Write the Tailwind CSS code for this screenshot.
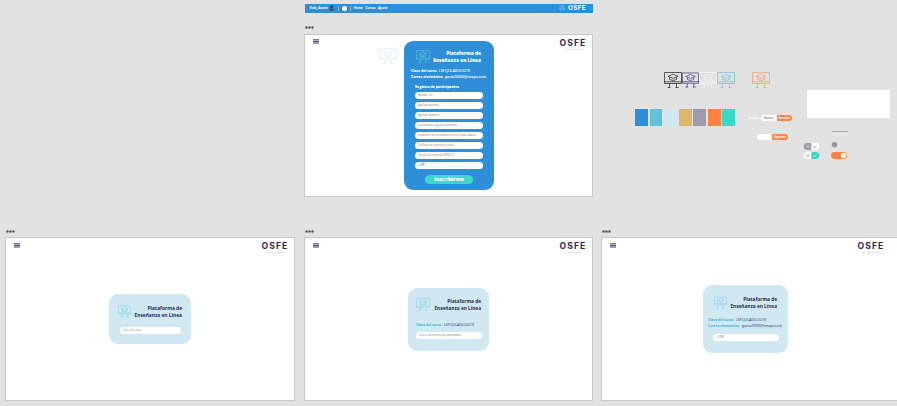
<!DOCTYPE html>
<html lang="es">
<head>
<meta charset="utf-8">
<title>OSFE</title>
<script src="https://cdn.jsdelivr.net/npm/@tailwindcss/browser@4"></script>
</head>
<body class="relative w-[897px] h-[406px] overflow-hidden bg-[#e2e2e2] font-['Open_Sans',sans-serif] text-[#2b2858]">
<svg class="hidden">
  <symbol id="pc" viewBox="0 0 18 16"><g fill="none" stroke="currentColor" stroke-width=".8"><path d="M.5.5h17v11H.5z M.5 9.8h17 M5.5 11.5v4 M12.5 11.5v4 M3.5 15.5h3 M11.5 15.5h3"/><path d="M4 4.3 9 2.2l5 2.1-5 2.1z M5.6 5.2v2.3q3.4 2 6.8 0V5.2"/></g></symbol>
  <symbol id="menu" viewBox="0 0 6 5"><path d="M0 .8h6M0 2.4h6M0 4h6" stroke="currentColor" stroke-width=".9"/></symbol>
  <symbol id="dots" viewBox="0 0 9 3"><g fill="#555"><circle cx="1.5" cy="1.5" r="1.2"/><circle cx="4.5" cy="1.5" r="1.2"/><circle cx="7.5" cy="1.5" r="1.2"/></g></symbol>
</svg>

<!-- Navigation bar -->
<nav class="absolute left-[304.5px] top-[4px] w-[288.5px] h-[8.5px] bg-[#2e8fd8] flex items-center pl-[5px] pr-[7px] text-white text-[3px] font-bold leading-none whitespace-nowrap">
  <span class="w-[19px]">Hola, Austin</span>
  <svg class="w-[5px] h-[6px]" viewBox="0 0 5 6"><circle cx="2.5" cy="1.8" r="1.4" fill="#26394e"/><path d="M0 6q.5-3 2.5-3T5 6z" fill="#45596b"/></svg>
  <span class="ml-[4px] w-[.5px] h-[5px] bg-white/40"></span>
  <span class="ml-[4px] size-[5px] rounded-full bg-white"></span>
  <span class="ml-[3px] w-[.5px] h-[5px] bg-white/40"></span>
  <span class="ml-[3.5px] w-[11.5px]">Home</span><span class="w-[12.5px]">Cursos</span><span>Ajuste</span>
  <svg class="ml-auto mr-[3px] w-[6px] h-[6px] text-white/70"><use href="#pc"/></svg>
  <span class="text-[6.3px] font-['Inter',sans-serif] tracking-[.4px]">OSFE</span>
</nav>

<!-- Registration artboard -->
<svg class="absolute left-[305px] top-[26px] w-[9px] h-[3px]"><use href="#dots"/></svg>
<main class="absolute left-[304px] top-[34px] w-[289px] h-[162.5px] bg-white border border-[#c8c8c8]">
  <header class="flex justify-between items-start pl-[8px] pr-[5px] pt-[4px]">
    <svg class="w-[6px] h-[5px]"><use href="#menu"/></svg>
    <div class="w-[28px] text-center"><p class="font-['Inter',sans-serif] font-bold text-[8.6px] leading-[9px] tracking-[1.1px]">OSFE</p><p class="text-[2.5px] leading-[2px] tracking-[1px] text-[#8885a5]">TABASCO</p></div>
  </header>
</main>
<svg class="absolute left-[379px] top-[48px] w-[18px] h-[16px] text-[#dceff7]"><use href="#pc"/></svg>
<section class="absolute left-[404px] top-[41px] w-[90px] h-[149px] rounded-[9px] bg-[#2e8fd8] text-white flex flex-col">
  <div class="flex justify-between items-start pl-[12px] pr-[13px] pt-[9px] h-[27px]">
    <svg class="w-[14px] h-[13px] text-[#62c1d5]"><use href="#pc"/></svg>
    <h1 class="text-right text-[4.75px] leading-[7px] font-extrabold whitespace-nowrap">Plataforma de<br>Enseñanza en Línea</h1>
  </div>
  <div class="pl-[7px] text-[3.5px] leading-[6px] h-[15px] whitespace-nowrap font-semibold">
    <p class="flex"><b class="w-[28px] text-[3.3px] font-extrabold">Clave del curso</b>LSFCJULADULIO19</p>
    <p class="flex"><b class="w-[34px] text-[3.3px] font-extrabold">Correo electrónico</b>gasta20000@imapo.com</p>
  </div>
  <h2 class="pl-[11px] pt-[1px] h-[9px] text-[3.4px] leading-[6px] font-extrabold whitespace-nowrap">Registro de participantes</h2>
  <div class="ml-[11px] w-[68px] flex flex-col gap-[3px] text-[2.7px] leading-[7px] text-[#777] whitespace-nowrap">
    <p class="h-[7px] rounded-full bg-white pl-[3px]">Nombre (s)</p>
    <p class="h-[7px] rounded-full bg-white pl-[3px]">Apellido paterno</p>
    <p class="h-[7px] rounded-full bg-white pl-[3px]">Apellido materno</p>
    <p class="h-[7px] rounded-full bg-white pl-[3px]">Licenciatura / grado académico</p>
    <p class="h-[7px] rounded-full bg-white pl-[3px] overflow-hidden">Institución de procedencia (ente al que labora)</p>
    <p class="h-[7px] rounded-full bg-white pl-[3px]">Teléfono de contacto/celular</p>
    <p class="h-[7px] rounded-full bg-white pl-[3px]">Horario de atención  09:00-17</p>
    <p class="h-[7px] rounded-full bg-white pl-[3px]">CURP</p>
  </div>
  <button class="mt-[5.5px] ml-[21px] w-[48px] h-[9.5px] rounded-full bg-[#3bd8cb] text-[5px] leading-[9px] font-extrabold">Inscribirme</button>
</section>

<!-- Course key artboard -->
<svg class="absolute left-[6px] top-[230px] w-[9px] h-[3px]"><use href="#dots"/></svg>
<main class="absolute left-[5px] top-[237px] w-[290px] h-[164px] bg-white border border-[#c8c8c8]">
  <header class="flex justify-between items-start pl-[8px] pr-[5px] pt-[4px]">
    <svg class="mt-[1px] w-[6px] h-[5px]"><use href="#menu"/></svg>
    <div class="w-[28px] text-center"><p class="font-['Inter',sans-serif] font-bold text-[8.6px] leading-[9px] tracking-[1.1px]">OSFE</p><p class="text-[2.5px] leading-[2px] tracking-[1px] text-[#8885a5]">TABASCO</p></div>
  </header>
</main>
<section class="absolute left-[109px] top-[294px] w-[82px] h-[49.5px] rounded-[9px] bg-[#cfe8f2]">
  <div class="flex justify-between items-start pl-[9px] pr-[9px] pt-[11px] h-[33px]">
    <svg class="w-[13px] h-[13px] text-[#8ad4e2]"><use href="#pc"/></svg>
    <h1 class="text-right text-[4.85px] leading-[7px] font-bold whitespace-nowrap">Plataforma de<br>Enseñanza en Línea</h1>
  </div>
  <p class="ml-[11px] w-[61px] h-[7px] rounded-full bg-white pl-[3px] text-[2.7px] leading-[7px] text-[#888]">Clave del curso</p>
</section>

<!-- Email artboard -->
<svg class="absolute left-[305px] top-[230px] w-[9px] h-[3px]"><use href="#dots"/></svg>
<main class="absolute left-[304px] top-[237px] w-[289px] h-[164px] bg-white border border-[#c8c8c8]">
  <header class="flex justify-between items-start pl-[8px] pr-[5px] pt-[4px]">
    <svg class="mt-[1px] w-[6px] h-[5px]"><use href="#menu"/></svg>
    <div class="w-[28px] text-center"><p class="font-['Inter',sans-serif] font-bold text-[8.6px] leading-[9px] tracking-[1.1px]">OSFE</p><p class="text-[2.5px] leading-[2px] tracking-[1px] text-[#8885a5]">TABASCO</p></div>
  </header>
</main>
<section class="absolute left-[408px] top-[287.5px] w-[81px] h-[63px] rounded-[9px] bg-[#cfe8f2]">
  <div class="flex justify-between items-start pl-[8px] pr-[8px] pt-[10px] h-[34px]">
    <svg class="w-[14px] h-[13px] text-[#8ad4e2]"><use href="#pc"/></svg>
    <h1 class="text-right text-[4.75px] leading-[7px] font-bold whitespace-nowrap">Plataforma de<br>Enseñanza en Línea</h1>
  </div>
  <p class="flex pl-[8px] h-[10.5px] text-[3.5px] leading-[6px] whitespace-nowrap"><b class="w-[28px] text-[3.4px] text-[#35b5cf]">Clave del curso</b>LSFCJULADULIO19</p>
  <p class="ml-[8px] w-[66px] h-[7px] rounded-full bg-white pl-[3px] text-[2.6px] leading-[7px] text-[#777] whitespace-nowrap">Correo electrónico del participante</p>
</section>

<!-- CURP artboard -->
<svg class="absolute left-[602px] top-[230px] w-[9px] h-[3px]"><use href="#dots"/></svg>
<main class="absolute left-[601px] top-[237px] w-[297px] h-[164px] bg-white border border-[#c8c8c8]">
  <header class="flex justify-between items-start pl-[8px] pr-[12px] pt-[4px]">
    <svg class="mt-[1px] w-[6px] h-[5px]"><use href="#menu"/></svg>
    <div class="w-[28px] text-center"><p class="font-['Inter',sans-serif] font-bold text-[8.6px] leading-[9px] tracking-[1.1px]">OSFE</p><p class="text-[2.5px] leading-[2px] tracking-[1px] text-[#8885a5]">TABASCO</p></div>
  </header>
</main>
<section class="absolute left-[703px] top-[285px] w-[85px] h-[68px] rounded-[9px] bg-[#cfe8f2]">
  <div class="flex justify-between items-start pl-[11px] pr-[11px] pt-[11px] h-[32px]">
    <svg class="w-[13px] h-[13px] text-[#8ad4e2]"><use href="#pc"/></svg>
    <h1 class="text-right text-[4.75px] leading-[7px] font-bold whitespace-nowrap">Plataforma de<br>Enseñanza en Línea</h1>
  </div>
  <div class="pl-[5px] h-[17px] text-[3.5px] leading-[6px] whitespace-nowrap">
    <p class="flex"><b class="w-[28px] text-[3.4px] text-[#35b5cf]">Clave del curso</b>LSFCJULADULIO19</p>
    <p class="flex"><b class="w-[34px] text-[3.4px] text-[#35b5cf]">Correo electrónico</b>gasta20000@imapo.com</p>
  </div>
  <p class="ml-[10px] w-[66px] h-[7px] rounded-full bg-white pl-[4px] text-[2.7px] leading-[7px] text-[#777]">CURP</p>
</section>

<!-- Icon variants -->
<div class="absolute left-[664px] top-[72px] flex">
  <svg class="w-[18px] h-[16px] text-[#333]"><use href="#pc"/></svg>
  <svg class="w-[17px] h-[16px] text-[#4b4777]"><use href="#pc"/></svg>
  <svg class="w-[18px] h-[16px] text-[#f4f4f4]"><use href="#pc"/></svg>
  <svg class="w-[18px] h-[16px] text-[#79c9d8]"><use href="#pc"/></svg>
  <svg class="ml-[17px] w-[18px] h-[16px] text-[#f5a57e]"><use href="#pc"/></svg>
</div>

<!-- Palette -->
<div class="absolute left-[635px] top-[109px] h-[17px] flex gap-[1.7px]">
  <i class="w-[12.9px] bg-[#2e8fd8]"></i><i class="w-[12.9px] bg-[#62c1d8]"></i><i class="w-[12.9px] bg-[#cfe8f2]"></i><i class="w-[12.9px] bg-[#deb76c]"></i><i class="w-[12.9px] bg-[#9c9cac]"></i><i class="w-[12.9px] bg-[#ff8142]"></i><i class="w-[12.9px] bg-[#3bd8c5]"></i>
</div>
<div class="absolute left-[807px] top-[90px] w-[83px] h-[28px] bg-white"></div>

<!-- Controls -->
<div class="absolute left-[748px] top-[114.5px] h-[6.5px] flex text-[2.9px] leading-[6px] text-white whitespace-nowrap font-semibold">
  <span class="w-[13px]">Nombre</span>
  <span class="w-[15.5px] rounded-l-full bg-white text-[#777] text-center">Buscar</span>
  <span class="w-[15.5px] rounded-r-full bg-[#ff8142] text-center font-bold">Guardar</span>
</div>
<div class="absolute left-[757px] top-[133.5px] h-[6px] flex text-[2.7px] leading-[6px] font-bold text-white whitespace-nowrap">
  <span class="w-[15px] rounded-l-full bg-white"></span>
  <span class="w-[16px] rounded-r-full bg-[#ff8142] text-center">Siguiente</span>
</div>
<i class="absolute left-[799px] top-[131px] w-[6px] h-[4px] bg-[#cfe8f2]/40"></i>
<div class="absolute left-[832px] top-[131px] w-[16px] h-[1.2px] bg-[#b0b0b0]"></div>
<svg class="absolute left-[803px] top-[142px] w-[46px] h-[18px]" viewBox="0 0 46 18">
  <path d="M8.5 1H4.2a3.3 3.3 0 0 0 0 7h4.3z" fill="#9c9da3"/><path d="M8.5 1h4.3a3.3 3.3 0 0 1 0 7H8.5z" fill="#fff"/>
  <path d="M8.5 10H4.2a3.3 3.3 0 0 0 0 7h4.3z" fill="#fff"/><path d="M8.5 10h4.3a3.3 3.3 0 0 1 0 7H8.5z" fill="#3bd8c5"/>
  <path d="m4 3.5 2 2m0-2-2 2" stroke="#eee" stroke-width=".7"/><path d="m4 12.5 2 2m0-2-2 2M10.5 4.5l1 1 2-2" fill="none" stroke="#777" stroke-width=".7"/><path d="m10.5 13.5 1 1 2-2" fill="none" stroke="#fff" stroke-width=".7"/>
  <circle cx="31.5" cy="2.7" r="2.7" fill="#929599"/>
  <rect x="28" y="10" width="16" height="7" rx="3.5" fill="#ff8142"/><circle cx="40.5" cy="13.5" r="2.7" fill="#fff"/>
</svg>
</body>
</html>
